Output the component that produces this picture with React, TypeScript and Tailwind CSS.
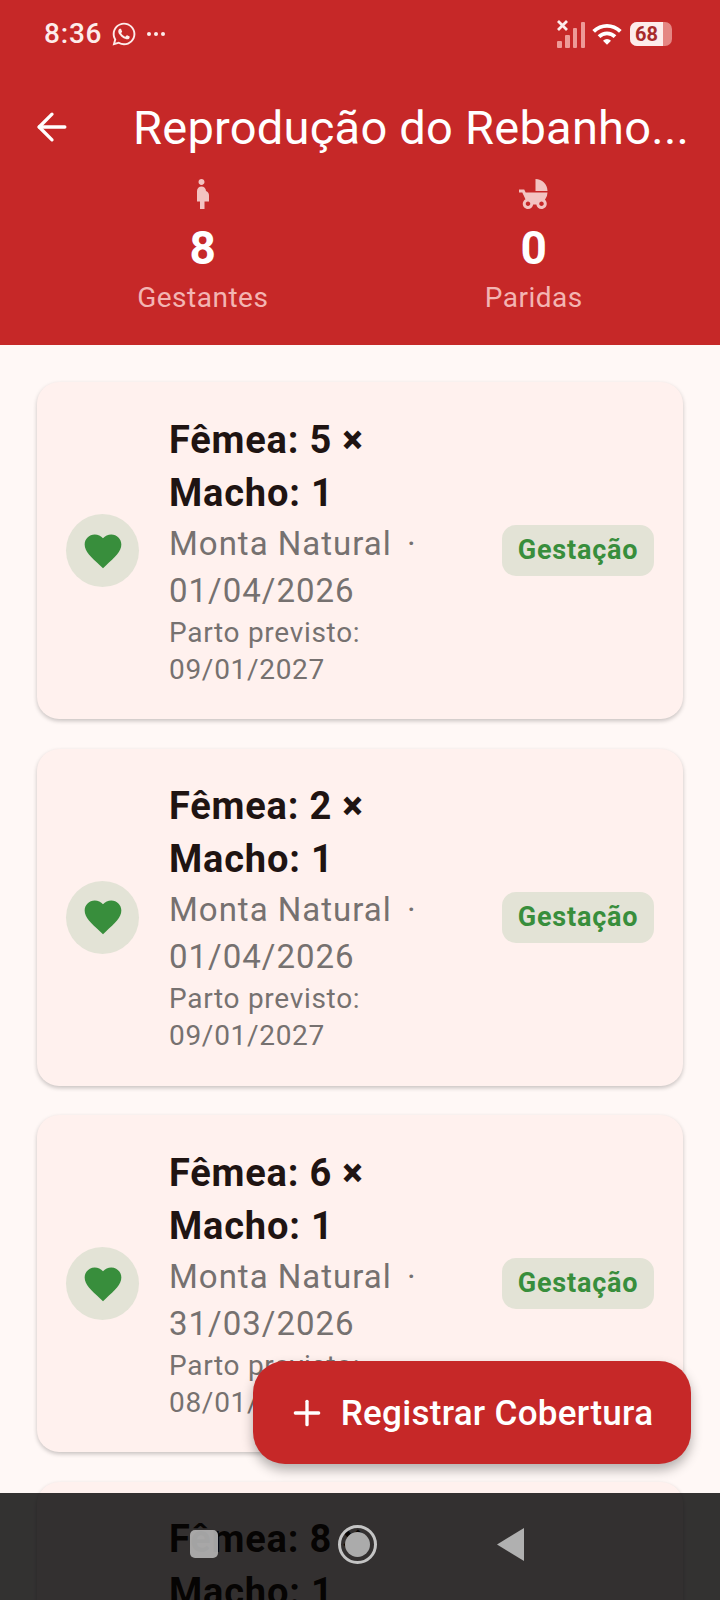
import { ArrowLeft, Plus } from "lucide-react";
import { FaWhatsapp } from "react-icons/fa";
import { MdChildFriendly, MdFavorite, MdPregnantWoman, MdWifi } from "react-icons/md";

const coberturas = [
  { femea: 5, data: "01/04/2026", parto: "09/01/2027" },
  { femea: 2, data: "01/04/2026", parto: "09/01/2027" },
  { femea: 6, data: "31/03/2026", parto: "08/01/2027" },
  { femea: 8, data: "31/03/2026", parto: "08/01/2027" },
];

const StatusBar = () => (
  <div className="flex h-[66px] items-center justify-between pl-[44px] pr-[48px] pt-[2px] text-white">
    <div className="flex items-center">
      <span className="text-[28px] font-medium tracking-[0.8px] text-[#fdeceb]">8:36</span>
      <FaWhatsapp className="ml-[9px] text-[#fdeceb]" size={26} />
      <span className="ml-[10px] flex gap-[3px]">
        <i className="h-[4px] w-[4px] rounded-full bg-[#fdeceb]" />
        <i className="h-[4px] w-[4px] rounded-full bg-[#fdeceb]" />
        <i className="h-[4px] w-[4px] rounded-full bg-[#fdeceb]" />
      </span>
    </div>
    <div className="flex items-center">
      <svg width="28" height="28" viewBox="0 0 28 28">
        <path d="M1 1l9 9M10 1l-9 9" stroke="#fdeceb" strokeWidth="2.8" />
        <rect x="0" y="21" width="5" height="7" rx="1" fill="#ee9a97" />
        <rect x="8" y="15" width="5" height="13" rx="1" fill="#ee9a97" />
        <rect x="16" y="8" width="4" height="20" rx="1" fill="#ee9a97" />
        <rect x="24" y="2" width="4" height="26" rx="1" fill="#ee9a97" />
      </svg>
      <MdWifi className="ml-[6px] text-white" size={32} />
      <div className="relative ml-[7px] flex h-[24px] w-[42px] items-center overflow-hidden rounded-[7px] bg-[#e58683]">
        <div className="flex h-full w-[33px] items-center justify-center bg-[#fdeceb] text-[20px] font-bold text-[#a92b2b]">
          68
        </div>
      </div>
    </div>
  </div>
);

const Stat = ({ icon, value, label }: { icon: React.ReactNode; value: string; label: string }) => (
  <div className="flex flex-col items-center">
    <div className="flex h-[36px] items-center text-[#f3c3c1]">{icon}</div>
    <span className="mt-[8px] text-[46px] font-bold leading-[56px] text-white">{value}</span>
    <span className="mt-[4px] text-[28px] leading-[36px] tracking-[0.5px] text-[#f3b5b3]">{label}</span>
  </div>
);

const Card = ({ femea, data, parto }: { femea: number; data: string; parto: string }) => (
  <div className="flex items-center rounded-[22px] bg-[#fff1ee] px-[29px] py-[31.5px] shadow-[0_2px_4px_rgba(0,0,0,0.22)]">
    <div className="flex h-[73px] w-[73px] shrink-0 items-center justify-center rounded-full bg-[#e3e3d6]">
      <MdFavorite className="text-[#388e3c]" size={44} />
    </div>
    <div className="ml-[30px] min-w-0 flex-1 pr-[30px]">
      <div className="text-[38px] font-bold leading-[53px] tracking-[0.8px] text-[#1f1412]">
        Fêmea: {femea} <span className="font-black">×</span> Macho: 1
      </div>
      <div className="text-[33px] leading-[47px] tracking-[1px] text-[#767170]">
        Monta Natural <span className="ml-[6px]">·</span> {data}
      </div>
      <div className="text-[28px] leading-[37px] tracking-[0.7px] text-[#767170]">Parto previsto: {parto}</div>
    </div>
    <div className="flex h-[51px] w-[152px] shrink-0 items-center justify-center rounded-[14px] bg-[#e3e3d6] text-[27px] font-bold tracking-[0.8px] text-[#388e3c]">
      Gestação
    </div>
  </div>
);

export default function App() {
  return (
    <div className="relative h-[1600px] w-[720px] overflow-hidden bg-[#fff8f6] font-['Roboto',sans-serif]">
      <header className="h-[345px] bg-[#c62828]">
        <StatusBar />
        <div className="flex h-[100px] items-center pl-[30px] pt-[22px] text-white">
          <ArrowLeft size={44} strokeWidth={1.8} />
          <h1 className="ml-[59px] whitespace-nowrap text-[47px] font-normal leading-none tracking-[0.25px]">
            Reprodução do Rebanho...
          </h1>
        </div>
        <div className="mt-[10px] flex justify-around px-[29px]">
          <Stat icon={<MdPregnantWoman size={36} />} value="8" label="Gestantes" />
          <Stat icon={<MdChildFriendly size={36} />} value="0" label="Paridas" />
        </div>
      </header>

      <main className="flex flex-col gap-[29.5px] px-[37px] pt-[37px]">
        {coberturas.map((c, i) => (
          <Card key={i} {...c} />
        ))}
      </main>

      <button className="absolute left-[253px] top-[1361px] flex h-[103px] w-[438px] items-center justify-center rounded-[32px] bg-[#c62828] pr-[4px] text-white shadow-[0_6px_12px_rgba(0,0,0,0.3)]">
        <Plus size={40} strokeWidth={2} />
        <span className="ml-[14px] pt-[3px] text-[35px] font-medium tracking-[0.3px]">Registrar Cobertura</span>
      </button>

      <div className="absolute bottom-0 left-0 h-[107px] w-full bg-black/80">
        <div className="absolute left-[190px] top-[37px] h-[28px] w-[28px] rounded-[5px] bg-[#b5b5b5]/90" />
        <div className="absolute left-[338px] top-[32px] flex h-[39px] w-[39px] items-center justify-center rounded-full border-[3px] border-[#c4c4c4]">
          <div className="h-[25px] w-[25px] rounded-full bg-[#ababab]" />
        </div>
        <svg className="absolute left-[497px] top-[35px]" width="27" height="33" viewBox="0 0 27 33">
          <path d="M27 0v33L0 16.5z" fill="#b0b0b0" />
        </svg>
      </div>
    </div>
  );
}
